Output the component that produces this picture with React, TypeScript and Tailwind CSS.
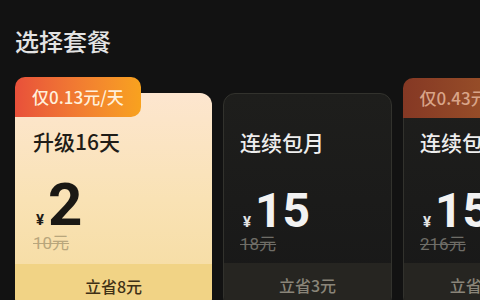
import React from 'react';

interface Plan {
  name: string;
  price: string;
  original: string;
  save: string;
  badge?: string;
  selected?: boolean;
}

const plans: Plan[] = [
  { name: '升级16天', price: '2', original: '10元', save: '立省8元', badge: '仅0.13元/天', selected: true },
  { name: '连续包月', price: '15', original: '18元', save: '立省3元' },
  { name: '连续包月', price: '15', original: '216元', save: '立省201元', badge: '仅0.43元/天' },
];

const cjk = { fontFamily: '"Noto Sans CJK SC", "Noto Sans", sans-serif' };
const num = { fontFamily: 'Roboto, "Noto Sans CJK SC", sans-serif' };

const PlanCard: React.FC<{ plan: Plan }> = ({ plan }) => {
  const on = plan.selected;
  return (
    <div
      className={`relative shrink-0 h-[216px] rounded-[12px] flex flex-col ${
        on
          ? 'w-[197px] bg-gradient-to-b from-[#fde6cf] via-[#f9e2b4] to-[#f5db9e]'
          : 'w-[169px] bg-gradient-to-b from-[#1e1e1c] to-[#181818] border-[1.5px] border-[#32322d]'
      }`}
    >
      {plan.badge && (
        <div
          className={`absolute top-[-16px] h-[40px] px-[17px] flex items-center rounded-tl-[10px] rounded-tr-[10px] rounded-br-[10px] text-[17px] font-medium ${
            on
              ? 'left-0 bg-gradient-to-r from-[#e8503a] to-[#f8a21e] text-[#fff0dc]'
              : 'left-[-1.5px] bg-gradient-to-r from-[#853824] to-[#a0592a] text-[#d9a488]'
          }`}
          style={cjk}
        >
          {plan.badge}
        </div>
      )}
      <div className={on ? 'pl-[18px]' : 'pl-[16px]'}>
        <div
          className={`pt-[34px] text-[21px] leading-[28px] font-medium ${on ? 'text-[#1f1c17]' : 'text-[#eeeeee]'}`}
          style={cjk}
        >
          {plan.name}
        </div>
        <div className={`flex items-baseline pl-[3px] ${on ? 'mt-[25px]' : 'mt-[35px]'}`} style={num}>
          <span className={`text-[15px] leading-none font-bold mr-[4px] ${on ? 'text-[#1f1c17]' : 'text-[#e2e2e2]'}`}>¥</span>
          <span
            className={`font-bold ${on ? 'text-[60px] leading-[50px] text-[#1a1814]' : 'text-[48px] leading-[40px] text-[#f2f2f2]'}`}
          >
            {plan.price}
          </span>
        </div>
        <div
          className={`mt-[3px] text-[17px] leading-[20px] line-through ${on ? 'text-[#b8a67c]' : 'text-[#6f6d67]'}`}
          style={num}
        >
          {plan.original}
        </div>
      </div>
      <div
        className={`mt-auto h-[45px] flex items-start justify-center pt-[12px] rounded-b-[12px] text-[16px] leading-[20px] font-medium ${
          on ? 'bg-[#f1d385] text-[#3f3016]' : 'bg-[#262521] text-[#8a8579]'
        }`}
        style={cjk}
      >
        {plan.save}
      </div>
    </div>
  );
};

export default function App() {
  return (
    <div className="w-[480px] h-[300px] overflow-hidden bg-[#121212]">
      <div className="pt-[26px] pl-[15px] text-[24px] leading-[30px] font-medium text-[#e3e3e3]" style={cjk}>
        选择套餐
      </div>
      <div className="mt-[37px] pl-[15px] flex gap-[11px]">
        {plans.map((p, i) => (
          <PlanCard key={i} plan={p} />
        ))}
      </div>
    </div>
  );
}
